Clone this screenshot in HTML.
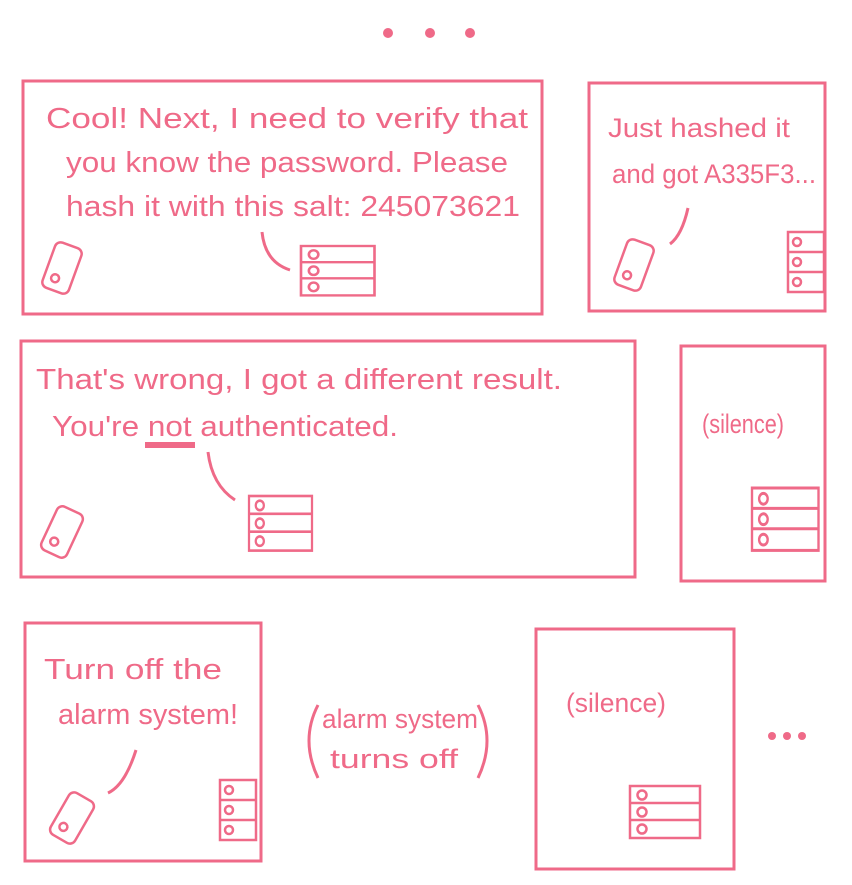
<!DOCTYPE html>
<html><head><meta charset="utf-8"><style>
html,body{margin:0;padding:0;background:#fff;}
svg{display:block}
text{font-family:"Liberation Sans",sans-serif;fill:#ef6a88;}
</style></head><body>
<svg width="852" height="885" viewBox="0 0 852 885" xmlns="http://www.w3.org/2000/svg">
<defs>
<g id="phone"><rect x="-14" y="-24" width="28" height="48" rx="6" fill="none" stroke="#ef6a88" stroke-width="2.5"/><circle cx="-3" cy="12" r="4" fill="none" stroke="#ef6a88" stroke-width="2.5"/></g>
<g id="srv3"><rect x="0" y="0" width="36" height="60" fill="none" stroke="#ef6a88" stroke-width="2.5"/><path d="M0 20H36M0 40H36" stroke="#ef6a88" stroke-width="2.5"/><circle cx="9" cy="10" r="4" fill="none" stroke="#ef6a88" stroke-width="2.5"/><circle cx="9" cy="30" r="4" fill="none" stroke="#ef6a88" stroke-width="2.5"/><circle cx="9" cy="50" r="4" fill="none" stroke="#ef6a88" stroke-width="2.5"/></g>
<g id="srvw"><rect x="0" y="0" width="70" height="52" fill="none" stroke="#ef6a88" stroke-width="2.5"/><path d="M0 17H70M0 34H70" stroke="#ef6a88" stroke-width="2.5"/><circle cx="12" cy="9" r="4.5" fill="none" stroke="#ef6a88" stroke-width="2.5"/><circle cx="12" cy="26" r="4.5" fill="none" stroke="#ef6a88" stroke-width="2.5"/><circle cx="12" cy="43" r="4.5" fill="none" stroke="#ef6a88" stroke-width="2.5"/></g>
</defs>
<g fill="#ef6a88"><circle cx="388" cy="33" r="5"/><circle cx="430" cy="33" r="5"/><circle cx="470" cy="33" r="5"/>
<circle cx="772" cy="736" r="4"/><circle cx="787" cy="736" r="4"/><circle cx="802" cy="736" r="4"/></g>
<g fill="none" stroke="#ef6a88" stroke-width="3">
<rect x="23" y="81" width="519" height="233"/>
<rect x="589" y="83" width="236" height="228"/>
<rect x="21" y="341" width="614" height="236"/>
<rect x="681" y="346" width="144" height="235"/>
<rect x="25" y="623" width="236" height="238"/>
<rect x="536" y="629" width="198" height="240"/>
<path d="M262 232 Q265 262 290 270"/><path d="M688 208 Q682 235 670 244"/><path d="M208 452 Q212 485 235 500"/><path d="M136 750 Q125 785 108 793"/>
<path d="M318 705 Q300 740 318 778"/><path d="M478 705 Q496 740 478 778"/>
<path d="M145 445 H195" stroke-width="6"/>
</g>
<use href="#phone" transform="translate(62,268) rotate(20)"/>
<use href="#phone" transform="translate(634,265) rotate(20)"/>
<use href="#phone" transform="translate(62,532) rotate(25)"/>
<use href="#phone" transform="translate(72,818) rotate(30)"/>
<use href="#srvw" transform="translate(301,246) scale(1.05,0.95)"/>
<use href="#srv3" transform="translate(788,232)"/>
<use href="#srvw" transform="translate(249,496) scale(0.9,1.05)"/>
<use href="#srvw" transform="translate(752,488) scale(0.95,1.2)"/>
<use href="#srv3" transform="translate(220,780)"/>
<use href="#srvw" transform="translate(630,786)"/>
<g font-size="29">
<text x="46" y="128" textLength="482" lengthAdjust="spacingAndGlyphs">Cool! Next, I need to verify that</text>
<text x="66" y="172" textLength="442" lengthAdjust="spacingAndGlyphs">you know the password. Please</text>
<text x="66" y="216" textLength="454" lengthAdjust="spacingAndGlyphs">hash it with this salt: 245073621</text>
<text x="36" y="389" textLength="526" lengthAdjust="spacingAndGlyphs">That's wrong, I got a different result.</text>
<text x="52" y="436" textLength="346" lengthAdjust="spacingAndGlyphs">You're not authenticated.</text>
<text x="44" y="679" textLength="178" lengthAdjust="spacingAndGlyphs">Turn off the</text>
<text x="58" y="724" textLength="180" lengthAdjust="spacingAndGlyphs">alarm system!</text>
</g>
<g font-size="27">
<text x="608" y="137" textLength="182" lengthAdjust="spacingAndGlyphs">Just hashed it</text>
<text x="612" y="183" textLength="204" lengthAdjust="spacingAndGlyphs">and got A335F3...</text>
<text x="702" y="433" textLength="82" lengthAdjust="spacingAndGlyphs">(silence)</text>
<text x="566" y="712" textLength="100" lengthAdjust="spacingAndGlyphs">(silence)</text>
<text x="322" y="728" textLength="156" lengthAdjust="spacingAndGlyphs">alarm system</text>
<text x="330" y="768" textLength="128" lengthAdjust="spacingAndGlyphs">turns off</text>
</g>
</svg>
</body></html>
